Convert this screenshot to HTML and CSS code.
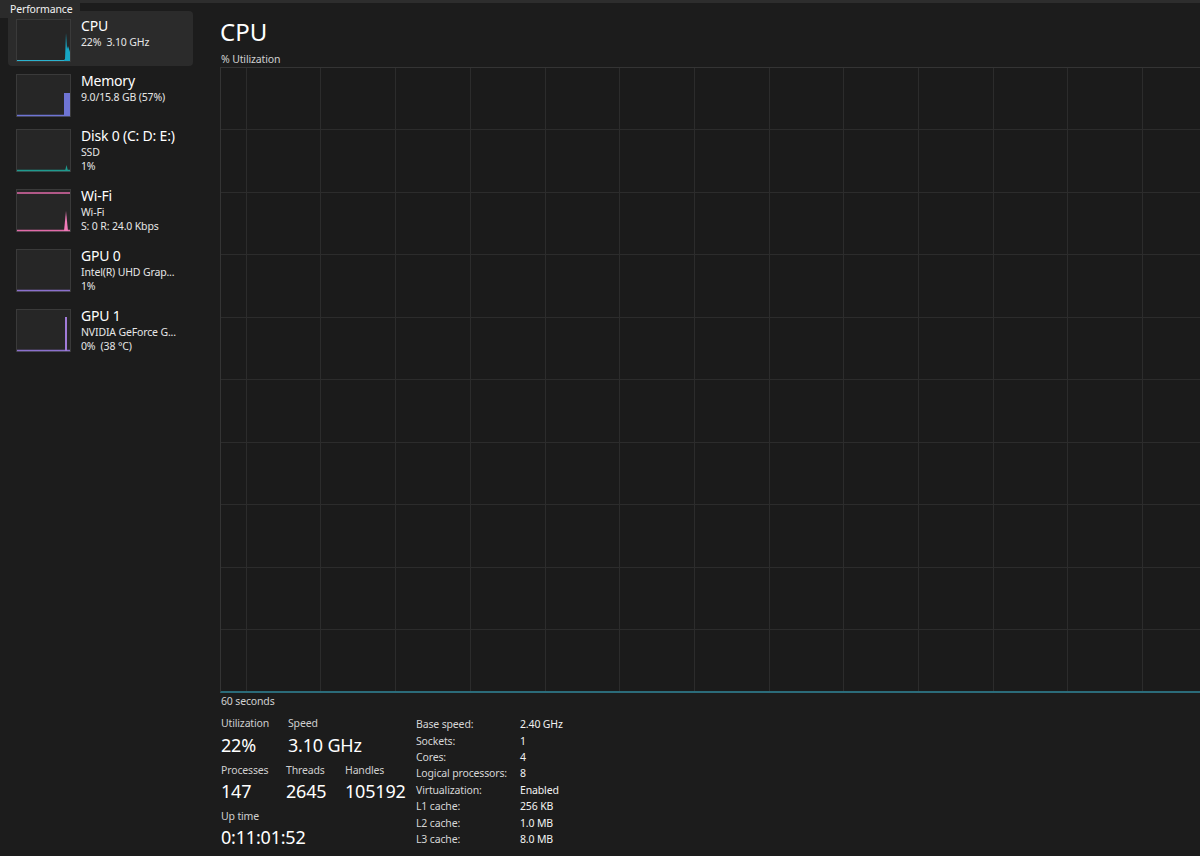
FILE: index.html
```html
<!DOCTYPE html>
<html lang="en">
<head>
  <meta charset="UTF-8" />
  <title>Task Manager - Performance</title>
  <link rel="stylesheet" href="styles.css">
</head>
<body>
  <div class="topline"></div>
  <div class="tooltip">Performance</div>

  <div class="app">
    <aside class="sidebar">
      <div class="item selected">
        <svg class="thumb" width="55" height="43" viewBox="0 0 55 43">
          <rect x="0.5" y="0.5" width="54" height="42" fill="#262626" stroke="#3a3a3a"/>
          <path d="M1 41 L48 41 L49 40 L50 14 L51 30 L52 27 L54 33 L54 42 L1 42 Z" fill="#17a6c4"/>
          <path d="M1 41.5 L48 41.5" stroke="#2cb3cf" stroke-width="1"/>
        </svg>
        <div class="text">
          <div class="title">CPU</div>
          <div class="sub">22%&nbsp; 3.10 GHz</div>
        </div>
      </div>

      <div class="item">
        <svg class="thumb" width="55" height="43" viewBox="0 0 55 43">
          <rect x="0.5" y="0.5" width="54" height="42" fill="#262626" stroke="#3a3a3a"/>
          <rect x="48" y="19" width="6" height="23" fill="#6e74d4"/>
          <path d="M1 41.5 L54 41.5" stroke="#6e74d4" stroke-width="1.5"/>
        </svg>
        <div class="text">
          <div class="title">Memory</div>
          <div class="sub">9.0/15.8 GB (57%)</div>
        </div>
      </div>

      <div class="item tall">
        <svg class="thumb" width="55" height="43" viewBox="0 0 55 43">
          <rect x="0.5" y="0.5" width="54" height="42" fill="#262626" stroke="#3a3a3a"/>
          <path d="M1 41.5 L54 41.5" stroke="#1e9a8e" stroke-width="1.5"/>
          <path d="M49 42 L50.5 36 L52 42 Z" fill="#1e9a8e"/>
        </svg>
        <div class="text">
          <div class="title">Disk 0 (C: D: E:)</div>
          <div class="sub">SSD</div>
          <div class="sub">1%</div>
        </div>
      </div>

      <div class="item tall">
        <svg class="thumb" width="55" height="43" viewBox="0 0 55 43">
          <rect x="0.5" y="0.5" width="54" height="42" fill="#262626" stroke="#3a3a3a"/>
          <path d="M1 4 L54 4" stroke="#e06aa8" stroke-width="1.5"/>
          <path d="M1 41.5 L54 41.5" stroke="#e06aa8" stroke-width="1.5"/>
          <path d="M48 42 L50 22 L52 42 Z" fill="#f07ab8"/>
        </svg>
        <div class="text">
          <div class="title">Wi-Fi</div>
          <div class="sub">Wi-Fi</div>
          <div class="sub">S: 0 R: 24.0 Kbps</div>
        </div>
      </div>

      <div class="item tall">
        <svg class="thumb" width="55" height="43" viewBox="0 0 55 43">
          <rect x="0.5" y="0.5" width="54" height="42" fill="#262626" stroke="#3a3a3a"/>
          <path d="M1 41.5 L54 41.5" stroke="#8a6fcc" stroke-width="1.5"/>
        </svg>
        <div class="text">
          <div class="title">GPU 0</div>
          <div class="sub">Intel(R) UHD Grap...</div>
          <div class="sub">1%</div>
        </div>
      </div>

      <div class="item tall">
        <svg class="thumb" width="55" height="43" viewBox="0 0 55 43">
          <rect x="0.5" y="0.5" width="54" height="42" fill="#262626" stroke="#3a3a3a"/>
          <path d="M1 41.5 L54 41.5" stroke="#8a6fcc" stroke-width="1.5"/>
          <rect x="49" y="8" width="2" height="34" fill="#a07ad8"/>
        </svg>
        <div class="text">
          <div class="title">GPU 1</div>
          <div class="sub">NVIDIA GeForce G...</div>
          <div class="sub">0%&nbsp; (38 °C)</div>
        </div>
      </div>
    </aside>

    <main class="main">
      <h1 class="heading">CPU</h1>
      <div class="caption">% Utilization</div>
      <div class="chart"></div>
      <div class="caption axis">60 seconds</div>

      <div class="details">
        <div class="stats">
          <div class="stat-row">
            <div class="stat w67"><div class="label">Utilization</div><div class="value">22%</div></div>
            <div class="stat"><div class="label">Speed</div><div class="value">3.10 GHz</div></div>
          </div>
          <div class="stat-row">
            <div class="stat w65"><div class="label">Processes</div><div class="value">147</div></div>
            <div class="stat w59"><div class="label">Threads</div><div class="value">2645</div></div>
            <div class="stat"><div class="label">Handles</div><div class="value">105192</div></div>
          </div>
          <div class="stat-row">
            <div class="stat"><div class="label">Up time</div><div class="value">0:11:01:52</div></div>
          </div>
        </div>

        <div class="specs">
          <div>Base speed:</div><div class="val">2.40 GHz</div>
          <div>Sockets:</div><div class="val">1</div>
          <div>Cores:</div><div class="val">4</div>
          <div>Logical processors:</div><div class="val">8</div>
          <div>Virtualization:</div><div class="val">Enabled</div>
          <div>L1 cache:</div><div class="val">256 KB</div>
          <div>L2 cache:</div><div class="val">1.0 MB</div>
          <div>L3 cache:</div><div class="val">8.0 MB</div>
        </div>
      </div>
    </main>
  </div>
</body>
</html>
```

FILE: styles.css
```css
html, body { margin: 0; padding: 0; }
body { background: #1c1c1c; color: #fff; font-family: "Noto Sans", "Open Sans", sans-serif; width: 1200px; height: 856px; overflow: hidden; position: relative; }

.topline { height: 3px; background: #2d2d2d; }
.tooltip { position: absolute; left: 0; top: 0; height: 18px; padding: 0 8px 0 10px; background: #2b2b2b; border-bottom-right-radius: 4px; font-size: 10.5px; letter-spacing: -0.15px; line-height: 18px; color: #f2f2f2; }

.app { display: flex; }

.sidebar { width: 185px; flex: none; padding: 8px 7px 0 8px; }
.item { display: flex; align-items: flex-start; gap: 10px; height: 55px; box-sizing: border-box; padding: 7px 8px 0; border-radius: 4px; }
.item.tall { height: 60px; }
.item.selected { background: #2b2b2b; }
.thumb { flex: none; display: block; margin-top: 1px; }
.text { white-space: nowrap; }
.title { font-size: 14px; line-height: 16px; letter-spacing: -0.2px; color: #fff; }
.sub { font-size: 10.5px; line-height: 14px; letter-spacing: -0.15px; color: #e6e6e6; }
.title + .sub { margin-top: 1px; }

.main { flex: none; padding-left: 20px; }
.heading { margin: 15px 0 0; font-size: 24px; line-height: 28px; font-weight: normal; }
.caption { margin-top: 6px; font-size: 10.5px; letter-spacing: -0.15px; line-height: 14px; color: #d0d0d0; padding-left: 1px; }
.caption.axis { margin-top: 1px; }

.chart {
  margin-top: 1px;
  width: 1000px;
  height: 623px;
  border: 1px solid #343434;
  border-bottom: 2px solid #2b6b79;
  background-color: #1b1b1b;
  background-image:
    repeating-linear-gradient(to right, transparent 0 24.7px, #2c2c2c 24.7px 25.7px, transparent 25.7px 74.7px),
    repeating-linear-gradient(to bottom, transparent 0 61.5px, #2c2c2c 61.5px 62.5px);
}

.details { display: flex; margin-top: 8px; padding-left: 1px; }
.stats { width: 195px; flex: none; }
.stat-row { display: flex; margin-bottom: 6px; }
.stat-row:last-child { margin-bottom: 0; }
.w67 { width: 67px; }
.w65 { width: 65px; }
.w59 { width: 59px; }
.label { font-size: 10.5px; letter-spacing: -0.15px; line-height: 14px; color: #cfcfcf; }
.value { margin-top: 2px; font-size: 18px; letter-spacing: -0.2px; line-height: 24px; color: #fff; }
.stat-row:first-child .value { margin-top: 3px; }

.specs { display: grid; grid-template-columns: 104px auto; grid-auto-rows: 16.43px; align-items: center; font-size: 10.5px; letter-spacing: -0.15px; color: #d6d6d6; white-space: nowrap; }
.specs .val { color: #f2f2f2; }
```
